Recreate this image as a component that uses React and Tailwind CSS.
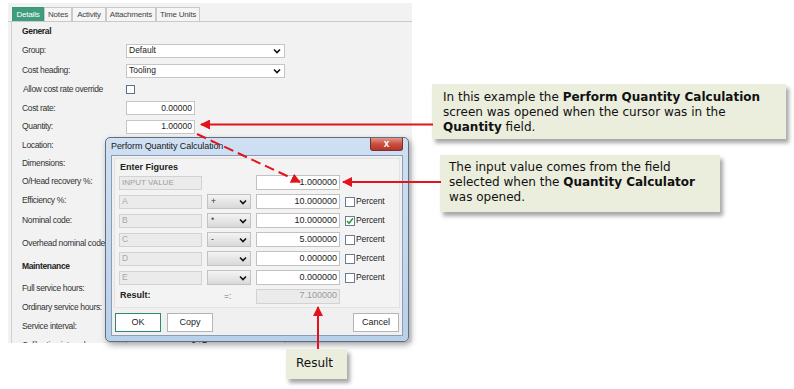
import React from "react";

const rows = [
  { label: "General", bold: true, h: 18 },
  { label: "Group:", h: 21, kind: "select", value: "Default" },
  { label: "Cost heading:", h: 19, kind: "select", value: "Tooling" },
  { label: "Allow cost rate override", h: 19, kind: "check", indent: true },
  { label: "Cost rate:", h: 18, kind: "input", value: "0.00000" },
  { label: "Quantity:", h: 19, kind: "input", value: "1.00000" },
  { label: "Location:", h: 18 },
  { label: "Dimensions:", h: 18 },
  { label: "O/Head recovery %:", h: 19 },
  { label: "Efficiency %:", h: 19 },
  { label: "Nominal code:", h: 21 },
  { label: "Overhead nominal code:", h: 24 },
  { label: "Maintenance", bold: true, h: 23 },
  { label: "Full service hours:", h: 20 },
  { label: "Ordinary service hours:", h: 19 },
  { label: "Service interval:", h: 18 },
  { label: "Calibration interval:", h: 20, kind: "days" },
];

const heights = {
  18: "h-[18px]",
  19: "h-[19px]",
  20: "h-[20px]",
  21: "h-[21px]",
  23: "h-[23px]",
  24: "h-[24px]",
};

function Chevron({ className = "" }) {
  return (
    <svg width="8" height="6" viewBox="0 0 8 6" className={className}>
      <path d="M1 1.5 L4 4.5 L7 1.5" fill="none" stroke="#111" strokeWidth="1.6" />
    </svg>
  );
}

function FormRow({ row }) {
  return (
    <div className={`flex items-center ${heights[row.h]}`}>
      <span
        className={`${row.indent ? "ml-[11px] w-[102px]" : "ml-[10px] w-[103px]"} shrink-0 whitespace-nowrap text-[8.5px] tracking-[-0.35px] ${
          row.bold ? "font-bold text-[#222]" : "text-[#333]"
        }`}
      >
        {row.label}
      </span>
      {row.kind === "select" && (
        <div className="ml-[1px] flex h-[14px] w-[159px] items-center justify-between border border-[#c6c6c6] bg-white pl-[2px] pr-[3px] text-[8.5px] text-[#222]">
          {row.value}
          <Chevron />
        </div>
      )}
      {row.kind === "check" && <div className="ml-[1px] h-[9px] w-[9px] border border-[#5a6f8c] bg-white" />}
      {row.kind === "input" && (
        <div className="ml-[1px] flex h-[14px] w-[69px] items-center justify-end border border-[#c6c6c6] bg-white pr-[2px] text-[8.5px] text-[#222]">
          {row.value}
        </div>
      )}
      {row.kind === "days" && (
        <div className="ml-[1px] flex h-[14px] w-[159px] items-center border border-[#c6c6c6] bg-white text-[8.5px] text-[#222]">
          <span className="w-[72px] pr-[3px] text-right">0</span>
          <div className="flex h-full flex-1 items-center justify-between border-l border-[#c6c6c6] pl-[2px] pr-[3px]">
            Days
            <Chevron />
          </div>
        </div>
      )}
    </div>
  );
}

const tabs = [
  { t: "Details", w: "w-[32px]" },
  { t: "Notes", w: "w-[28px]" },
  { t: "Activity", w: "w-[34px]" },
  { t: "Attachments", w: "w-[50px]" },
  { t: "Time Units", w: "w-[44px]" },
];

function CalcRow({ letter, op, value, checked }) {
  return (
    <div className="flex h-[19px] items-center">
      <div className="flex h-[14px] w-[83px] items-center border border-[#d2d2d2] bg-[#ebebeb] pl-[2px] text-[8.5px] text-[#a8a8a8]">
        {letter}
      </div>
      <div className="ml-[5px] flex h-[15px] w-[44px] items-center justify-between border border-[#c2c2c2] bg-gradient-to-b from-[#f4f4f4] to-[#d9d9d9] pl-[3px] pr-[3px] text-[8.5px] text-[#333]">
        <span>{op}</span>
        <Chevron />
      </div>
      <div className="ml-[5px] flex h-[15px] w-[84px] items-center justify-end border border-[#c2c2c2] bg-white pr-[2px] text-[9px] text-[#222]">
        {value}
      </div>
      <div className="ml-[5px] flex h-[10px] w-[10px] items-center justify-center border border-[#6b7d95] bg-white">
        {checked && (
          <svg width="8" height="8" viewBox="0 0 8 8">
            <path d="M1 4 L3 6.3 L7 1.2" fill="none" stroke="#2f9a3c" strokeWidth="1.5" />
          </svg>
        )}
      </div>
      <span className="ml-[1px] text-[8.5px] tracking-[-0.1px] text-[#222]">Percent</span>
    </div>
  );
}

function Dialog() {
  return (
    <div className="absolute left-[105px] top-[137px] h-[205px] w-[304px] rounded-[5px] border border-[#5f6e80] bg-gradient-to-b from-[#cfe0f3] to-[#b9d0ea] shadow-[2px_3px_6px_rgba(0,0,0,0.35)]">
      <div className="flex h-[17px] items-center justify-between">
        <span className="ml-[5px] mt-[1px] text-[9px] tracking-[-0.1px] text-[#1a1a1a]">Perform Quantity Calculation</span>
        <div className="mr-[5px] flex h-[13px] w-[33px] items-center justify-center self-start rounded-b-[3px] border border-t-0 border-[#7a2f2f] bg-gradient-to-b from-[#e3968a] via-[#c8503f] to-[#b5352a]">
          <span className="text-[10px] font-bold leading-none text-white">x</span>
        </div>
      </div>
      <div className="mx-[5px] flex h-[181px] flex-col border border-[#8c9db3] bg-[#f0f0f0]">
        <div className="mx-[2px] mt-[2px] h-[150px] border border-[#e2e2e2] bg-[#f3f3f3] pl-[4px] pt-[3px]">
          <div className="flex h-[11px] items-center pl-[1px] text-[9px] font-bold text-[#222]">Enter Figures</div>
          <div className="flex h-[19px] items-center">
            <div className="flex h-[14px] w-[83px] items-center border border-[#d2d2d2] bg-[#ebebeb] pl-[2px] text-[8px] text-[#a0a0a0]">
              INPUT VALUE
            </div>
            <div className="ml-[54px] flex h-[15px] w-[84px] items-center justify-end border border-[#c2c2c2] bg-white pr-[2px] text-[9px] text-[#222]">
              1.000000
            </div>
          </div>
          <CalcRow letter="A" op="+" value="10.000000" />
          <CalcRow letter="B" op="*" value="10.000000" checked />
          <CalcRow letter="C" op="-" value="5.000000" />
          <CalcRow letter="D" op="" value="0.000000" />
          <CalcRow letter="E" op="" value="0.000000" />
          <div className="flex h-[18px] items-center">
            <span className="w-[105px] pl-[1px] text-[9px] font-bold text-[#222]">Result:</span>
            <span className="w-[32px] text-[8.5px] text-[#777]">=:</span>
            <div className="flex h-[15px] w-[84px] items-center justify-end border border-[#d2d2d2] bg-[#ebebeb] pr-[2px] text-[9px] text-[#999]">
              7.100000
            </div>
          </div>
        </div>
        <div className="mt-[5px] flex items-center px-[3px]">
          <button className="h-[19px] w-[46px] border-[1.5px] border-[#2e8a6a] bg-white text-[9px] text-[#222]">OK</button>
          <button className="ml-[6px] h-[19px] w-[46px] border border-[#b5b5b5] bg-white text-[9px] text-[#222]">Copy</button>
          <button className="ml-auto h-[19px] w-[46px] border border-[#b5b5b5] bg-white text-[9px] text-[#222]">Cancel</button>
        </div>
      </div>
    </div>
  );
}

function Callout({ className, children }) {
  return (
    <div
      className={`absolute bg-[#ebeddd] font-['DejaVu_Sans',Verdana,sans-serif] text-[12px] leading-[15px] text-[#111] shadow-[3px_4px_4px_rgba(0,0,0,0.35)] ${className}`}
    >
      {children}
    </div>
  );
}

function Arrows() {
  return (
    <svg className="pointer-events-none absolute left-0 top-0" width="794" height="389" viewBox="0 0 794 389">
      <defs>
        <marker id="ah" viewBox="0 0 10 10" refX="9" refY="5" markerWidth="5" markerHeight="5" orient="auto">
          <path d="M0 0 L10 5 L0 10 z" fill="#e3131b" />
        </marker>
      </defs>
      <line x1="433" y1="124.5" x2="201" y2="124.5" stroke="#e3131b" strokeWidth="2" markerEnd="url(#ah)" />
      <line x1="441" y1="182" x2="343" y2="182" stroke="#e3131b" strokeWidth="2" markerEnd="url(#ah)" />
      <line x1="197" y1="134" x2="300" y2="182" stroke="#e3131b" strokeWidth="2" strokeDasharray="10 5" markerEnd="url(#ah)" />
      <line x1="318" y1="349" x2="318" y2="307" stroke="#e3131b" strokeWidth="2" markerEnd="url(#ah)" />
    </svg>
  );
}

export default function App() {
  return (
    <div className="relative h-[389px] w-[794px] overflow-hidden bg-white font-['Liberation_Sans',Arial,sans-serif]">
      <div className="ml-[8px] mt-[3px] h-[340px] w-[404px] overflow-hidden bg-[#f2f2f2]">
        <div className="flex h-[19px] items-end border-b border-[#c9c9c9] pl-[4px]">
          {tabs.map((tab, i) => (
            <div
              key={tab.t}
              className={`flex h-[14px] ${tab.w} items-center justify-center whitespace-nowrap border border-b-0 text-[8px] tracking-[-0.2px] ${
                i === 0 ? "border-[#3a9878] bg-[#3e9d7d] text-white" : "border-[#c9c9c9] bg-[#f5f5f5] text-[#444]"
              }`}
            >
              {tab.t}
            </div>
          ))}
        </div>
        <div className="ml-[3px] border-l border-[#d0d0d0]">
          {rows.map((r) => (
            <FormRow key={r.label} row={r} />
          ))}
        </div>
      </div>

      <Dialog />

      <Callout className="left-[432px] top-[84px] h-[55px] w-[354px] pl-[11px] pt-[6px]">
        In this example the <b>Perform Quantity Calculation</b>
        <br />
        screen was opened when the cursor was in the
        <br />
        <b>Quantity</b> field.
      </Callout>
      <Callout className="left-[440px] top-[155px] h-[57px] w-[280px] pl-[9px] pt-[5px]">
        The input value comes from the field
        <br />
        selected when the <b>Quantity Calculator</b>
        <br />
        was opened.
      </Callout>
      <Callout className="left-[286px] top-[349px] h-[30px] w-[61px] pl-[10px] pt-[7px]">Result</Callout>

      <Arrows />
    </div>
  );
}
